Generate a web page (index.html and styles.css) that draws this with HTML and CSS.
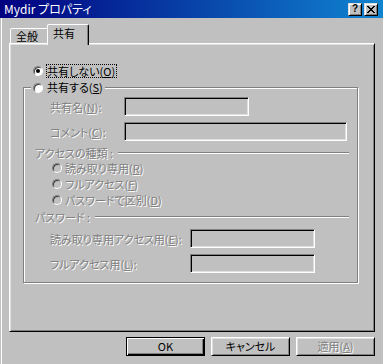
FILE: index.html
```html
<!DOCTYPE html>
<html lang="ja">
<head>
<meta charset="utf-8">
<title>Mydir プロパティ</title>
<link rel="stylesheet" href="styles.css">
</head>
<body>
<div class="window">
  <div class="titlebar">
    <span class="title">Mydir プロパティ</span>
    <div class="caption-btns">
      <span class="cbtn help">?</span>
      <span class="cbtn close"><svg width="8" height="7" viewBox="0 0 8 7"><path d="M0 0h2v1h1v1h2V1h1V0h2v1H7v1H6v1H5v1h1v1h1v1h1v1H6V6H5V5H3v1H2v1H0V6h1V5h1V4h1V3H2V2H1V1H0z" fill="#000"/></svg></span>
    </div>
  </div>
  <div class="client">
    <div class="tabs">
      <div class="tab">全般</div>
      <div class="tab active">共有</div>
    </div>
    <div class="panel">
      <div class="opt">
        <span class="radio checked"></span>
        <span class="focus">共有しない(<u>O</u>)</span>
      </div>
      <div class="group">
        <div class="legend">
          <span class="radio"></span>
          <span class="legend-text">共有する(<u>S</u>)</span>
        </div>
        <div class="field first">
          <span class="label dis">共有名(<u>N</u>):</span>
          <span class="input short"></span>
        </div>
        <div class="field gap6">
          <span class="label dis">コメント(<u>C</u>):</span>
          <span class="input long"></span>
        </div>
        <div class="sep access">
          <span class="dis">アクセスの種類 :</span>
          <span class="line"></span>
        </div>
        <div class="ropt"><span class="radio off"></span><span class="dis">読み取り専用(<u>R</u>)</span></div>
        <div class="ropt"><span class="radio off"></span><span class="dis">フルアクセス(<u>F</u>)</span></div>
        <div class="ropt"><span class="radio off"></span><span class="dis">パスワードで区別(<u>D</u>)</span></div>
        <div class="sep pwd">
          <span class="dis">パスワード :</span>
          <span class="line"></span>
        </div>
        <div class="field pw first-pw">
          <span class="label wide dis">読み取り専用アクセス用(<u>E</u>):</span>
          <span class="input short"></span>
        </div>
        <div class="field pw gap6">
          <span class="label wide dis">フルアクセス用(<u>L</u>):</span>
          <span class="input short"></span>
        </div>
      </div>
    </div>
    <div class="buttons">
      <button class="btn default">OK</button>
      <button class="btn">キャンセル</button>
      <button class="btn"><span class="dis">適用(<u>A</u>)</span></button>
    </div>
  </div>
</div>
</body>
</html>
```
FILE: styles.css
```css
body {
  margin: 0;
  font-family: "Noto Sans CJK JP", "Noto Sans", sans-serif;
  font-size: 11px;
  font-feature-settings: "palt";
  color: #000;
}
.window {
  width: 383px;
  height: 364px;
  background: #c0c0c0;
  overflow: hidden;
}
.titlebar {
  height: 18px;
  box-sizing: border-box;
  display: flex;
  align-items: center;
  justify-content: space-between;
  padding: 0 5px 0 4px;
  background: linear-gradient(90deg, #000080, #1084d0);
  color: #fff;
}
.title {
  font-size: 12px;
  line-height: 18px;
}
.caption-btns {
  display: flex;
  gap: 2px;
}
.cbtn {
  width: 14px;
  height: 13px;
  box-sizing: border-box;
  background: #c0c0c0;
  border: 1px solid;
  border-color: #dfdfdf #000 #000 #dfdfdf;
  box-shadow: inset 1px 1px #fff, inset -1px -1px #808080;
  display: flex;
  align-items: center;
  justify-content: center;
  color: #000;
}
.help {
  font-family: "Liberation Sans", sans-serif;
  font-weight: bold;
  font-size: 10px;
  line-height: 10px;
}
.client {
  margin-left: 1px;
  border-left: 1px solid #fff;
  padding: 6px 0 0 7px;
  height: 346px;
  box-sizing: border-box;
}
.tabs {
  display: flex;
  align-items: flex-end;
  height: 19px;
  padding-left: 1px;
}
.tab {
  width: 39px;
  height: 15px;
  box-sizing: border-box;
  border: 1px solid;
  border-bottom: none;
  border-color: #fff #000 transparent #fff;
  border-radius: 2px 2px 0 0;
  box-shadow: inset -1px 0 #808080;
  padding-left: 5px;
  line-height: 14px;
  background: #c0c0c0;
}
.tab.active {
  width: 42px;
  height: 21px;
  margin-left: -2px;
  margin-bottom: -2px;
  padding-top: 1px;
  position: relative;
  z-index: 1;
  line-height: 14px;
}
.panel {
  width: 366px;
  height: 289px;
  box-sizing: border-box;
  border: 1px solid;
  border-color: #fff #000 #000 #fff;
  box-shadow: inset 1px 1px #dfdfdf, inset -1px -1px #808080;
  padding-top: 20px;
}
.opt {
  display: flex;
  align-items: center;
  height: 14px;
  margin-left: 23px;
}
.radio {
  width: 10px;
  height: 10px;
  box-sizing: border-box;
  border-radius: 50%;
  border: 1px solid;
  border-color: #808080 #fff #fff #808080;
  box-shadow: inset 1px 1px #404040;
  background: #fff;
  flex: none;
  display: flex;
  align-items: center;
  justify-content: center;
  margin-right: 3px;
}
.radio.off {
  background: #c0c0c0;
}
.radio.checked::after {
  content: "";
  width: 4px;
  height: 4px;
  border-radius: 50%;
  background: #000;
}
.focus {
  border: 1px dotted #000;
  padding: 0 1px 0 0;
  line-height: 12px;
}
.group {
  margin: 9px 0 0 13px;
  width: 335px;
  box-sizing: border-box;
  border: 1px solid #808080;
  box-shadow: inset 1px 1px #fff, 1px 1px #fff;
  padding: 0 8px 9px 11px;
}
.legend {
  display: flex;
  align-items: center;
  width: fit-content;
  height: 15px;
  margin: -8px 0 0 -4px;
  padding: 0 2px;
  background: #c0c0c0;
}
.legend-text {
  line-height: 15px;
  margin-left: 1px;
}
.dis {
  color: #808080;
  text-shadow: 1px 1px 0 #fff;
}
.field {
  display: flex;
  align-items: center;
  height: 19px;
  margin-left: 15px;
}
.field.first {
  margin-top: 2px;
}
.field.gap6 {
  margin-top: 6px;
}
.field.first-pw {
  margin-top: 5px;
}
.label {
  width: 74px;
  flex: none;
}
.label.wide {
  width: 140px;
}
.input {
  height: 19px;
  box-sizing: border-box;
  border: 1px solid;
  border-color: #808080 #fff #fff #808080;
  box-shadow: inset 1px 1px #000, inset -1px -1px #dfdfdf;
  background: #c0c0c0;
}
.input.short {
  width: 125px;
}
.input.long {
  width: 223px;
}
.sep {
  display: flex;
  align-items: center;
  height: 15px;
}
.sep.access {
  margin-top: 4px;
}
.sep.pwd {
  margin-top: 1px;
}
.line {
  flex: 1;
  border-top: 1px solid #808080;
  border-bottom: 1px solid #fff;
  margin-left: 5px;
}
.ropt {
  display: flex;
  align-items: center;
  height: 16px;
  margin-left: 17px;
}
.buttons {
  display: flex;
  justify-content: flex-end;
  gap: 6px;
  width: 366px;
  margin-top: 5px;
}
.btn {
  width: 79px;
  height: 19px;
  box-sizing: border-box;
  margin: 0;
  padding: 0;
  border: 1px solid;
  border-color: #fff #000 #000 #fff;
  box-shadow: inset 1px 1px #dfdfdf, inset -1px -1px #808080;
  background: #c0c0c0;
  font: inherit;
  font-feature-settings: "palt";
  line-height: 17px;
  color: #000;
  text-align: center;
}
.btn.default {
  border: 1px solid #000;
  box-shadow: inset 1px 1px #fff, inset -1px -1px #000, inset -2px -2px #808080;
}
```
